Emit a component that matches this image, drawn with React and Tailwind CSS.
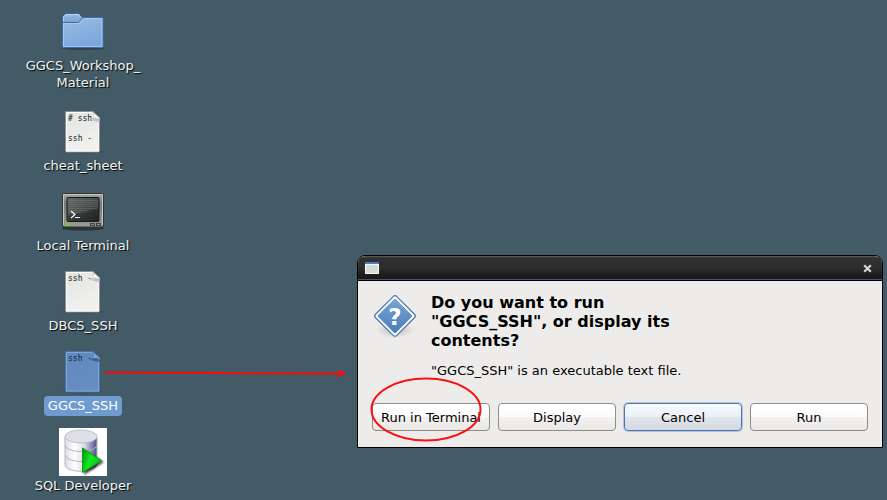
import React from "react";

function FolderIcon() {
  return (
    <svg width="48" height="48" viewBox="0 0 48 48" aria-hidden="true">
      <defs>
        <linearGradient id="folderFront" x1="0" y1="0" x2="0.4" y2="1">
          <stop offset="0" stopColor="#9cbde3" />
          <stop offset="1" stopColor="#7ba7dc" />
        </linearGradient>
        <linearGradient id="folderTab" x1="0" y1="0" x2="0" y2="1">
          <stop offset="0" stopColor="#9dbbe0" />
          <stop offset="1" stopColor="#5f8fc9" />
        </linearGradient>
      </defs>
      <ellipse cx="24" cy="40" rx="22" ry="2" fill="#26343c" opacity="0.6" />
      <path d="M3.500 22V8.500l3-3h13.500l3 4h20.500V22z" fill="url(#folderTab)" stroke="#3465a4" />
      <path d="M3.500 39.500V14.500h16l4.500-5h20v30z" fill="url(#folderFront)" stroke="#3b6eae" />
      <path d="M4.500 38.500v-23h15.500l4.500-5h18.500v28z" fill="none" stroke="#b5cfee" strokeOpacity="0.7" />
      <path d="M4.500 13.500V9l2.500-2.500h12.500l2.500 3" fill="none" stroke="#c4d7ed" strokeOpacity="0.8" />
    </svg>
  );
}

function FileIcon({ lines, selected }) {
  const id = selected ? "paperSelected" : "paper";
  return (
    <svg width="48" height="48" viewBox="0 0 48 48" aria-hidden="true">
      <defs>
        <linearGradient id={id} x1="0" y1="0" x2="0.3" y2="1">
          <stop offset="0" stopColor={selected ? "#6089bd" : "#e2e4e0"} />
          <stop offset="1" stopColor={selected ? "#658dc1" : "#f1f2ef"} />
        </linearGradient>
      </defs>
      <ellipse cx="24" cy="44" rx="20" ry="1.500" fill="#26343c" opacity="0.5" />
      <path
        d="M6.500 3.500h27.500l6.500 6.500v34h-34z"
        fill={`url(#${id})`}
        stroke={selected ? "#4e72a2" : "#8b9190"}
      />
      <path
        d="M7.500 4.500h26l6 6v32.500h-32z"
        fill="none"
        stroke={selected ? "#7da5da" : "#fcfcfa"}
      />
      <g fontFamily="'DejaVu Sans Mono', monospace" fontSize="8" fill={selected ? "#10243d" : "#161616"}>
        {lines.map((line, i) => (
          <text key={i} x="9" y={13 + i * 10}>
            {line}
          </text>
        ))}
      </g>
      <path
        d="M33.500 4c1.500 2 1.500 4 .5 6.500 2.500-1 5-.5 6.500 1V10z"
        fill={selected ? "#86abdc" : "#ffffff"}
        stroke={selected ? "#5a80b3" : "#b3b7b3"}
        strokeWidth="0.500"
      />
      <path
        d="M34 10.500c-2 .5-3.500-.5-4.500-1.500 1.500 3.500 6.500 4.500 11 5v-2c-1.500-2-4-2.500-6.500-1.500z"
        fill={selected ? "#41638f" : "#c2c5c1"}
      />
    </svg>
  );
}

function TerminalIcon() {
  return (
    <svg width="48" height="48" viewBox="0 0 48 48" aria-hidden="true">
      <defs>
        <linearGradient id="bezel" x1="0" y1="0" x2="0" y2="1">
          <stop offset="0" stopColor="#a6a8a2" />
          <stop offset="0.3" stopColor="#777973" />
          <stop offset="1" stopColor="#9a9c96" />
        </linearGradient>
        <linearGradient id="screen" x1="0" y1="0" x2="1" y2="1">
          <stop offset="0" stopColor="#65696a" />
          <stop offset="0.6" stopColor="#3e4344" />
          <stop offset="1" stopColor="#202526" />
        </linearGradient>
      </defs>
      <ellipse cx="24" cy="40.500" rx="21" ry="2" fill="#1d262b" opacity="0.7" />
      <rect x="4" y="37" width="40" height="4" rx="1" fill="#2f3331" />
      <rect x="3.500" y="5.500" width="41" height="33.500" rx="2" fill="url(#bezel)" stroke="#2e3436" />
      <path d="M4.500 37V6.500h39V37" fill="none" stroke="#c5c7c1" />
      <rect x="8" y="9.500" width="32" height="24" rx="1" fill="url(#screen)" stroke="#17191a" />
      <g stroke="#8a8f8c" strokeOpacity="0.35">
        <path d="M9 12.500h30M9 14.500h30M9 16.500h30M9 18.500h30M9 20.500h29M9 22.500h19M9 24.500h13" />
      </g>
      <path d="M39 20c-8 6-22 4-30 8v5h30z" fill="#151a1c" opacity="0.3" />
      <path d="M12 23l4 3.500-4 3.500" fill="none" stroke="#ffffff" strokeWidth="1.200" />
      <path d="M16 29.500h5" stroke="#ffffff" />
      <rect x="7" y="35" width="3" height="3" fill="#6fd71c" />
      <path d="M31 36.500h5M37 36.500h5" stroke="#40443f" strokeWidth="3" />
      <path d="M32 36.500h3M38 36.500h3" stroke="#8d908a" />
    </svg>
  );
}

function DatabaseIcon() {
  return (
    <svg width="48" height="48" viewBox="0 0 48 48" aria-hidden="true">
      <defs>
        <linearGradient id="cylinder">
          <stop offset="0" stopColor="#dcdce6" />
          <stop offset="0.3" stopColor="#ffffff" />
          <stop offset="0.6" stopColor="#dcdceb" />
          <stop offset="1" stopColor="#4c4c88" />
        </linearGradient>
        <linearGradient id="play" x1="0" y1="0" x2="1" y2="0.4">
          <stop offset="0" stopColor="#078a10" />
          <stop offset="0.500" stopColor="#12e81f" />
          <stop offset="1" stopColor="#0ac01a" />
        </linearGradient>
        <filter id="playShadow" x="-30%" y="-30%" width="160%" height="160%">
          <feGaussianBlur stdDeviation="1.200" />
        </filter>
      </defs>
      <rect width="48" height="48" fill="#ffffff" />
      <path d="M6 8.500v28c0 9 32 9 32 0v-28z" fill="url(#cylinder)" stroke="#b7b7c2" />
      <path d="M6 17.500c3 8 29 8 32 0M6 27.500c3 8 29 8 32 0" fill="none" stroke="#b4b4c0" />
      <ellipse cx="22" cy="8.500" rx="16" ry="6.500" fill="#dfdfe9" stroke="#c1c1ca" />
      <path d="M25 22l20 12-20 13z" fill="#222222" opacity="0.8" filter="url(#playShadow)" />
      <path d="M23.500 20l19 12.500-19 12z" fill="url(#play)" stroke="#08a012" />
    </svg>
  );
}

function QuestionIcon() {
  return (
    <svg width="48" height="48" viewBox="0 0 48 48" className="shrink-0" aria-hidden="true">
      <defs>
        <linearGradient id="diamond" x1="0" y1="0" x2="1" y2="1">
          <stop offset="0" stopColor="#79a3d3" />
          <stop offset="1" stopColor="#4b7eb9" />
        </linearGradient>
        <radialGradient id="diamondShadow">
          <stop offset="0" stopColor="#000000" stopOpacity="0.22" />
          <stop offset="1" stopColor="#000000" stopOpacity="0" />
        </radialGradient>
      </defs>
      <ellipse cx="24" cy="38" rx="19" ry="8" fill="url(#diamondShadow)" />
      <rect x="9" y="9" width="30" height="30" rx="2.500" transform="rotate(45 24 24)" fill="#ffffff" stroke="#4774ae" strokeWidth="1.200" />
      <rect x="11.500" y="11.500" width="25" height="25" rx="1" transform="rotate(45 24 24)" fill="url(#diamond)" />
      <text x="24" y="33" textAnchor="middle" fontFamily="'DejaVu Sans', sans-serif" fontWeight="bold" fontSize="23" fill="#ffffff">
        ?
      </text>
    </svg>
  );
}

const desktopItems = [
  { name: "GGCS_Workshop_ Material", icon: <FolderIcon />, tall: true },
  { name: "cheat_sheet", icon: <FileIcon lines={["# ssh", "", "ssh -"]} /> },
  { name: "Local Terminal", icon: <TerminalIcon /> },
  { name: "DBCS_SSH", icon: <FileIcon lines={["ssh -"]} /> },
  { name: "GGCS_SSH", icon: <FileIcon lines={["ssh -"]} selected />, selected: true },
  { name: "SQL Developer", icon: <DatabaseIcon /> },
];

function DesktopItem({ name, icon, tall, selected }) {
  return (
    <li className={tall ? "h-25" : "h-20"}>
      <button type="button" className="flex w-full flex-col items-center">
        {icon}
        <span
          className={
            selected
              ? "rounded bg-[#6f9bd1] px-1 pt-px pb-0.5 text-white"
              : "px-1 pt-px pb-0.5 text-[#f2f4f5] [text-shadow:1px_1px_1px_#000]"
          }
        >
          {name}
        </span>
      </button>
    </li>
  );
}

const buttonBase = "h-7 flex-1 rounded border text-center text-black";
const buttonPlain =
  "border-[#8f8b87] bg-[linear-gradient(#ffffff,#fbfbfb_50%,#f3f2f1_50%,#e9e8e6)]";
const buttonFocus =
  "border-[#4c77ae] bg-[linear-gradient(#f7faff,#eaeff7_50%,#e1e6ed_50%,#d5dae0)] shadow-[0_0_0_1px_#b3c7e2]";

function RunDialog() {
  return (
    <section
      role="dialog"
      aria-labelledby="dialog-title"
      className="absolute top-[255px] right-1 left-[357px] overflow-hidden rounded-t-lg border border-black bg-[#edeceb]"
    >
      <header className="flex h-[25px] items-center justify-between border-b border-black bg-[linear-gradient(#626262,#303030_8%,#2d2d2d_50%,#1c1c1c_80%,#191919)] pr-2.5 pl-[7px] shadow-[inset_0_-1px_0_#42577b]">
        <svg width="14" height="12" viewBox="0 0 14 12" aria-hidden="true">
          <rect width="14" height="12" fill="#f8f8f6" />
          <rect width="14" height="2" fill="#4d7dbd" />
          <rect x="1" y="3" width="12" height="8" fill="#d8dbd5" />
        </svg>
        <button type="button" aria-label="Close">
          <svg width="9" height="9" viewBox="0 0 9 9" aria-hidden="true">
            <path d="M1.200 1.200l6.600 6.600M7.800 1.200L1.200 7.800" stroke="#d6d6d6" strokeWidth="2.200" />
          </svg>
        </button>
      </header>
      <div className="px-3.5 pt-3 pb-4">
        <div className="flex gap-3">
          <div className="-ml-px -mt-px">
            <QuestionIcon />
          </div>
          <div>
            <h1 id="dialog-title" className="max-w-[250px] text-[16px] leading-[19px] font-bold">
              Do you want to run "GGCS_SSH", or display its contents?
            </h1>
            <p className="mt-3">"GGCS_SSH" is an executable text file.</p>
          </div>
        </div>
        <div className="mt-6 flex gap-2">
          <button type="button" className={`${buttonBase} ${buttonPlain}`}>Run in Terminal</button>
          <button type="button" className={`${buttonBase} ${buttonPlain}`}>Display</button>
          <button type="button" className={`${buttonBase} ${buttonFocus}`}>Cancel</button>
          <button type="button" className={`${buttonBase} ${buttonPlain}`}>Run</button>
        </div>
      </div>
    </section>
  );
}

function Annotations() {
  return (
    <svg className="pointer-events-none absolute top-0 left-0" width="887" height="500" aria-hidden="true">
      <path d="M105 372.500L342 373.500" stroke="#f50d0d" strokeWidth="2" />
      <path d="M347 373.500l-10-4 2.500 4-2.500 4z" fill="#f50d0d" />
      <ellipse cx="426" cy="409.500" rx="54.500" ry="31" fill="none" stroke="#fb1111" strokeWidth="2" />
    </svg>
  );
}

export default function App() {
  return (
    <main className="relative min-h-screen overflow-hidden bg-[#425b67] font-['DejaVu_Sans',sans-serif] text-[13px] leading-[17px] text-black">
      <ul className="w-[166px] px-4 pt-2">
        {desktopItems.map((item) => (
          <DesktopItem key={item.name} {...item} />
        ))}
      </ul>
      <RunDialog />
      <Annotations />
    </main>
  );
}
